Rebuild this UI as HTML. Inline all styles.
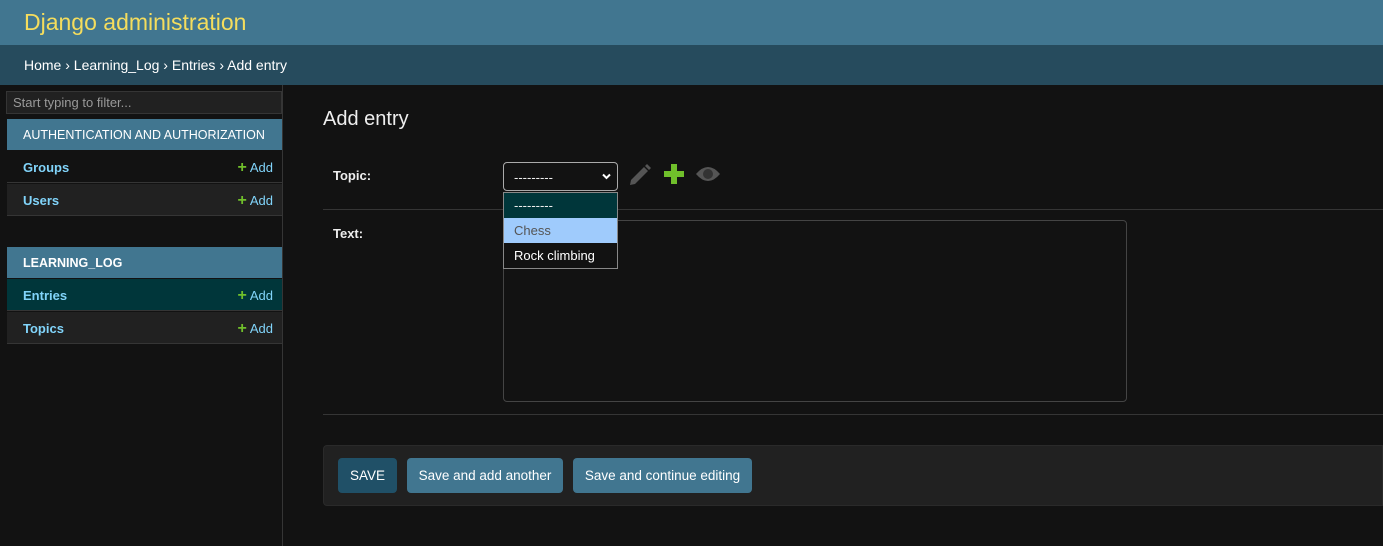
<!DOCTYPE html>
<html><head><style>
*{box-sizing:border-box;margin:0;padding:0}
body{width:1383px;height:546px;background:#121212;font-family:"Liberation Sans",sans-serif;font-size:13px;color:#eee;position:relative;overflow:hidden}
.a{position:absolute}
.hdr{left:0;top:0;width:1383px;height:45px;background:#417690;color:#f5dd5d;font-size:23px;padding:9px 0 0 24px}
.bc{left:0;top:45px;width:1383px;height:40px;background:#264b5d;color:#fff;font-size:14px;padding:12px 0 0 24px}
.side{left:0;top:85px;width:283px;height:461px;border-right:1px solid #353535}
.cap{left:7px;width:275px;height:31px;background:#417690;color:#fff;font-size:12.5px;padding:9px 0 0 16px}
.row{left:7px;width:275px;height:32px;color:#81d4fa;font-weight:bold;font-size:13px;padding:9px 0 0 16px;border-bottom:1px solid #353535}
.row span{position:absolute;right:9px;top:8px;font-weight:normal}
.row span b{color:#70bf2b;font-size:16px;margin-right:3px}
.btn{top:458px;height:35px;border-radius:4px;background:#417690;color:#fff;font-size:13.5px;padding:10px 0 0;text-align:center}
</style></head><body>
<div class="a hdr">Django administration</div>
<div class="a bc">Home › Learning_Log › Entries › Add entry</div>
<div class="a side"></div>
<div class="a" style="left:6px;top:91px;width:276px;height:23px;background:#212121;border:1px solid #353535;color:#999;padding:3px 6px;font-size:13px">Start typing to filter...</div>
<div class="a cap" style="top:119px">AUTHENTICATION AND AUTHORIZATION</div>
<div class="a row" style="top:151px;background:#121212">Groups<span><b>+</b>Add</span></div>
<div class="a row" style="top:184px;background:#212121">Users<span><b>+</b>Add</span></div>
<div class="a cap" style="top:247px;font-weight:bold">LEARNING_LOG</div>
<div class="a row" style="top:279px;background:#00363a">Entries<span><b>+</b>Add</span></div>
<div class="a row" style="top:312px;background:#212121">Topics<span><b>+</b>Add</span></div>

<div class="a" style="left:323px;top:108px;font-size:20px;color:#eee">Add entry</div>
<div class="a" style="left:333px;top:168px;font-weight:bold;color:#eee">Topic:</div>
<div class="a" style="left:323px;top:209px;width:1060px;height:1px;background:#353535"></div>
<div class="a" style="left:333px;top:226px;font-weight:bold;color:#eee">Text:</div>
<div class="a" style="left:503px;top:220px;width:624px;height:182px;border:1px solid #444;border-radius:4px;background:#121212"></div>
<div class="a" style="left:323px;top:414px;width:1060px;height:1px;background:#353535"></div>

<div class="a" style="left:503px;top:162px;width:115px;height:29px;border:1px solid #aaa;border-radius:4px;background:#121212;padding:7px 10px;font-size:13px">---------<svg style="position:absolute;right:6px;top:10px" width="9" height="7" viewBox="0 0 9 7"><path d="M1 1.5L4.5 5L8 1.5" stroke="#fff" stroke-width="2" fill="none"/></svg></div>
<div class="a" style="left:503px;top:192px;width:115px;height:77px;border:1px solid #888;background:#121212;font-size:13px">
<div style="height:25px;background:#00363a;padding:5px 10px">---------</div>
<div style="height:25px;background:#9fcbfc;color:#555;padding:5px 10px">Chess</div>
<div style="height:25px;padding:5px 10px;color:#fff">Rock climbing</div></div>
<svg class="a" style="left:628px;top:163px" width="24" height="24" viewBox="0 0 24 24"><path d="M3 17 L16 4 L20 8 L7 21 L2 22 Z" fill="#555"/><path d="M17 3 L19 1 L23 5 L21 7Z" fill="#555"/></svg>
<svg class="a" style="left:664px;top:164px" width="20" height="20" viewBox="0 0 20 20"><path d="M7 0h6v7h7v6h-7v7h-6v-7h-7v-6h7z" fill="#70bf2b"/></svg>
<svg class="a" style="left:695px;top:164px" width="26" height="20" viewBox="0 0 26 20"><path d="M1 10 Q13 -4 25 10 Q13 24 1 10Z" fill="#555"/><circle cx="13" cy="10" r="5" fill="#333"/></svg>

<div class="a" style="left:323px;top:445px;width:1060px;height:61px;background:#212121;border:1px solid #2a2a2a;border-radius:4px 0 0 4px"></div>
<div class="a btn" style="left:338px;width:59px;background:#205067">SAVE</div>
<div class="a btn" style="left:407px;width:156px">Save and add another</div>
<div class="a btn" style="left:573px;width:179px">Save and continue editing</div>
</body></html>
